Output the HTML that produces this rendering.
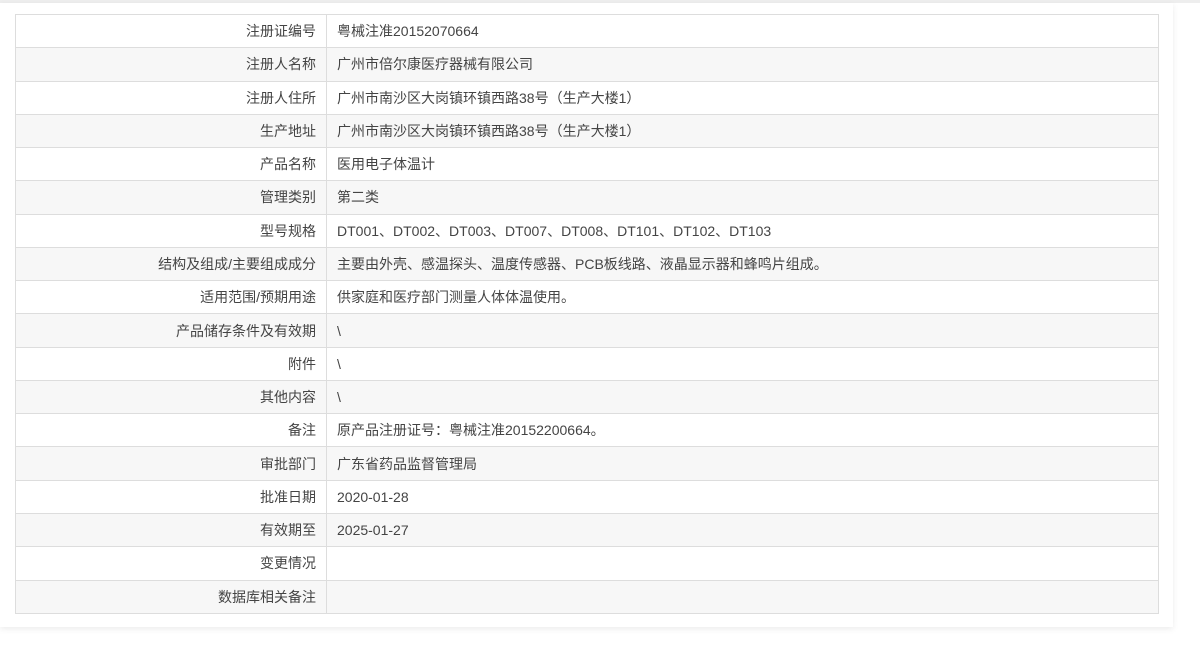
<!DOCTYPE html>
<html><head><meta charset="utf-8"><style>
body{margin:0;width:1200px;height:650px;background:#fff;font-family:"Liberation Sans","Noto Sans CJK SC",sans-serif;overflow:hidden}
.top{position:absolute;left:0;top:0;width:1200px;height:3px;background:#eee}
.box{position:absolute;left:0;top:3px;width:1173px;height:624px;background:#fff;box-shadow:0 2px 6px rgba(0,0,0,.08)}
table{position:absolute;left:15px;top:14px;width:1144px;border-collapse:collapse;font-size:14px;color:#444}
td{border:1px solid #ddd;height:33.28px;padding:0 10px;box-sizing:border-box;line-height:16px}
td.l{width:311px;text-align:right}
tr:nth-child(even){background:#f7f7f7}
</style></head><body>
<div class="top"></div><div class="box"></div>
<table>
<tr><td class="l">注册证编号</td><td>粤械注准20152070664</td></tr>
<tr><td class="l">注册人名称</td><td>广州市倍尔康医疗器械有限公司</td></tr>
<tr><td class="l">注册人住所</td><td>广州市南沙区大岗镇环镇西路38号（生产大楼1）</td></tr>
<tr><td class="l">生产地址</td><td>广州市南沙区大岗镇环镇西路38号（生产大楼1）</td></tr>
<tr><td class="l">产品名称</td><td>医用电子体温计</td></tr>
<tr><td class="l">管理类别</td><td>第二类</td></tr>
<tr><td class="l">型号规格</td><td>DT001、DT002、DT003、DT007、DT008、DT101、DT102、DT103</td></tr>
<tr><td class="l">结构及组成/主要组成成分</td><td>主要由外壳、感温探头、温度传感器、PCB板线路、液晶显示器和蜂鸣片组成。</td></tr>
<tr><td class="l">适用范围/预期用途</td><td>供家庭和医疗部门测量人体体温使用。</td></tr>
<tr><td class="l">产品储存条件及有效期</td><td>\</td></tr>
<tr><td class="l">附件</td><td>\</td></tr>
<tr><td class="l">其他内容</td><td>\</td></tr>
<tr><td class="l">备注</td><td>原产品注册证号：粤械注准20152200664。</td></tr>
<tr><td class="l">审批部门</td><td>广东省药品监督管理局</td></tr>
<tr><td class="l">批准日期</td><td>2020-01-28</td></tr>
<tr><td class="l">有效期至</td><td>2025-01-27</td></tr>
<tr><td class="l">变更情况</td><td></td></tr>
<tr><td class="l">数据库相关备注</td><td></td></tr>
</table>
</body></html>
